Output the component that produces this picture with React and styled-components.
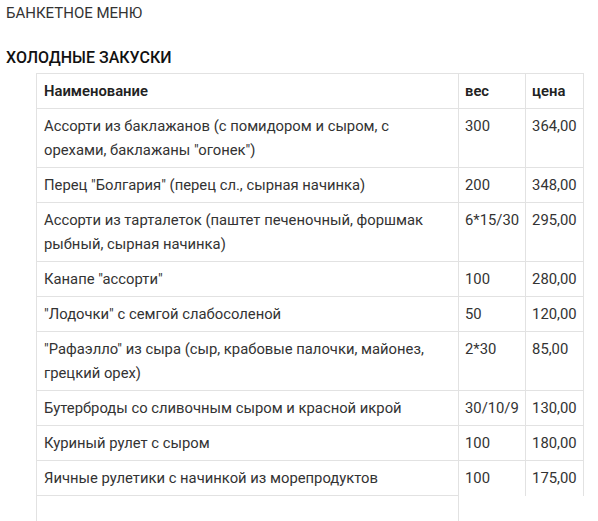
import React from 'react';
import styled, { createGlobalStyle } from 'styled-components';

const GlobalStyle = createGlobalStyle`
  html, body {
    margin: 0;
    padding: 0;
    background: #fff;
  }
  body {
    font-family: Roboto, 'Liberation Sans', Arial, sans-serif;
    color: #333;
    overflow: hidden;
  }
`;

const Page = styled.div`
  padding: 4px 6px 0;
`;

const MenuTitle = styled.div`
  font-size: 15px;
  line-height: 18px;
  color: #333;
  text-transform: uppercase;
`;

const SectionTitle = styled.h3`
  margin: 26px 0 5px;
  font-size: 16px;
  line-height: 20px;
  font-weight: 500;
  color: #111;
`;

const Table = styled.table`
  margin-left: 30px;
  border-collapse: collapse;
  font-size: 14.8px;
  line-height: 24px;
`;

const Cell = styled.td`
  border: 1px solid #e2e2e2;
  border-bottom: none;
  padding: 5px 6px;
  padding-left: ${p => (p.$first ? 7 : 6)}px;
  vertical-align: top;
  width: ${p => p.$w}px;
  font-weight: ${p => (p.$head ? 600 : 400)};
  color: ${p => (p.$head ? '#222' : '#333')};
  white-space: ${p => (p.$nowrap ? 'nowrap' : 'normal')};
`;

const items = [
  ['Ассорти из баклажанов (с помидором и сыром, с орехами, баклажаны "огонек")', '300', '364,00'],
  ['Перец "Болгария" (перец сл., сырная начинка)', '200', '348,00'],
  ['Ассорти из тарталеток (паштет печеночный, форшмак рыбный, сырная начинка)', '6*15/30', '295,00'],
  ['Канапе "ассорти"', '100', '280,00'],
  ['"Лодочки" с семгой слабосоленой', '50', '120,00'],
  ['"Рафаэлло" из сыра (сыр, крабовые палочки, майонез, грецкий орех)', '2*30', '85,00'],
  ['Бутерброды со сливочным сыром и красной икрой', '30/10/9', '130,00'],
  ['Куриный рулет с сыром', '100', '180,00'],
  ['Яичные рулетики с начинкой из морепродуктов', '100', '175,00'],
];

export default function App() {
  return (
    <>
      <GlobalStyle />
      <Page>
        <MenuTitle>Банкетное меню</MenuTitle>
        <SectionTitle>ХОЛОДНЫЕ ЗАКУСКИ</SectionTitle>
        <Table>
          <tbody>
            <tr>
              <Cell $head $first $w={408}>Наименование</Cell>
              <Cell $head $w={52}>вес</Cell>
              <Cell $head $w={44}>цена</Cell>
            </tr>
            {items.map(([name, weight, price]) => (
              <tr key={name}>
                <Cell $first>{name}</Cell>
                <Cell $nowrap>{weight}</Cell>
                <Cell $nowrap>{price}</Cell>
              </tr>
            ))}
            <tr>
              <Cell $first>&nbsp;</Cell>
            </tr>
          </tbody>
        </Table>
      </Page>
    </>
  );
}
